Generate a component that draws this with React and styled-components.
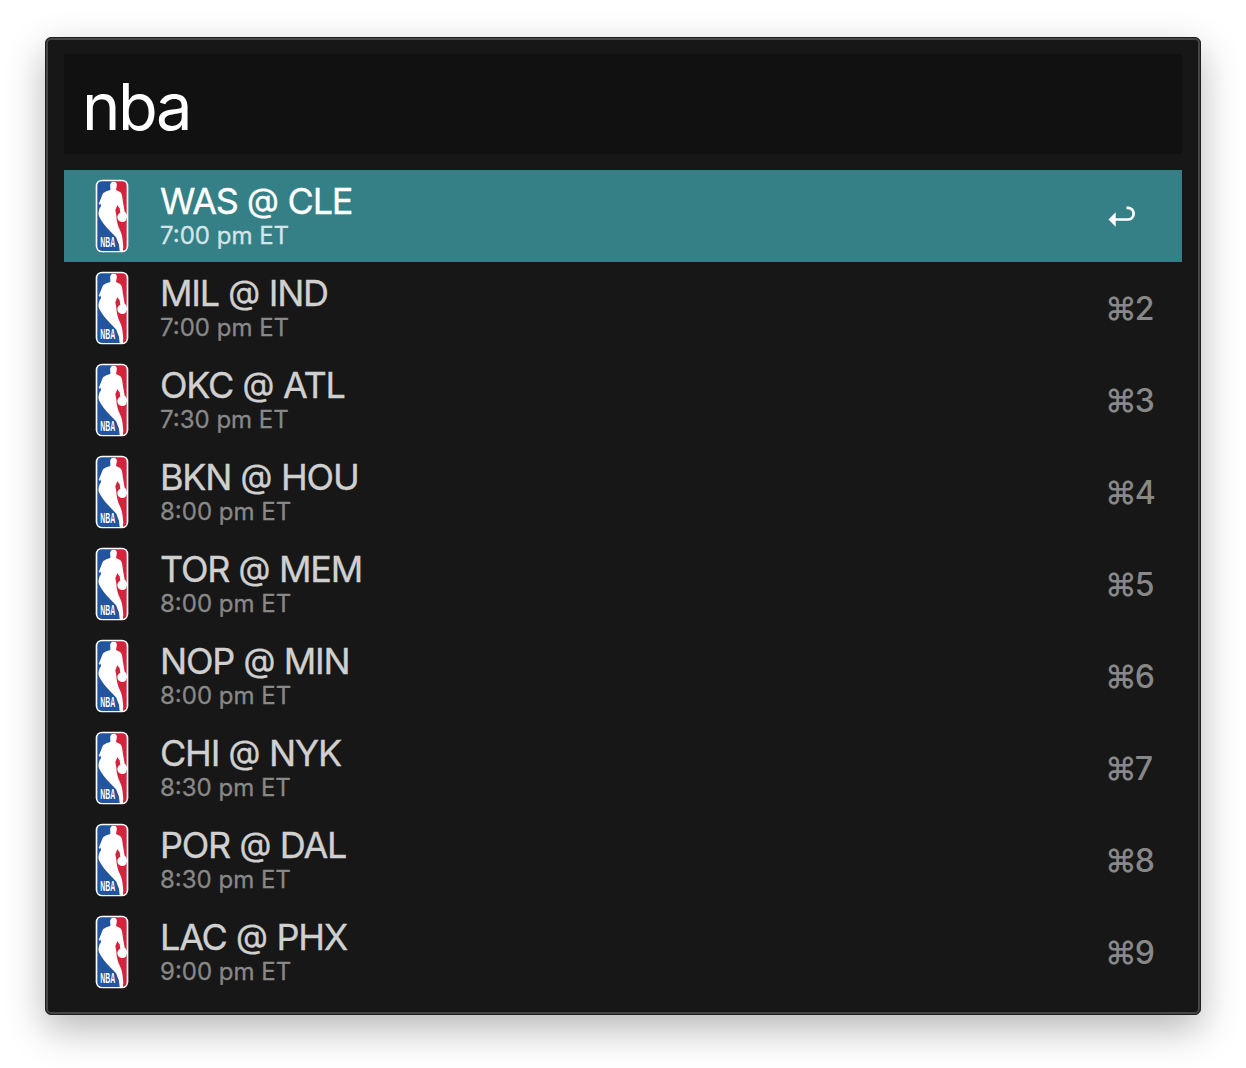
import React from "react";
import styled, { createGlobalStyle } from "styled-components";

const Global = createGlobalStyle`
  * { box-sizing: border-box; }
  body { margin: 0; background: #fff; font-family: Inter, "Liberation Sans", sans-serif; }
`;

const Page = styled.main`
  height: 1068px;
  padding: 37px 45px 0;
  overflow: hidden;
`;

const Panel = styled.section`
  height: 978px;
  padding: 16px 18px;
  display: flex;
  flex-direction: column;
  gap: 16px;
  border: 1px solid #1d1e1e;
  border-radius: 6px;
  background: #171717;
  box-shadow: inset 0 0 0 2px #444546, 0 14px 38px rgba(0, 0, 0, 0.29);
`;

const Search = styled.div`
  flex: none;
  height: 100px;
  padding: 6px 0 0 18px;
  display: flex;
  align-items: center;
  background: #111;
  color: #fff;
  font-size: 65px;
  line-height: 94px;
  font-weight: 400;
  letter-spacing: -2.4px;
`;

const List = styled.ul`
  margin: 0;
  padding: 0;
  list-style: none;
`;

const Row = styled.li`
  height: 92px;
  padding: 0 29px 0 31px;
  display: flex;
  align-items: center;
  background: ${(p) => (p.$active ? "#358086" : "transparent")};
`;

const Logo = styled.svg`
  flex: none;
  width: 34px;
  height: 74px;
  overflow: visible;
`;

const Labels = styled.div`
  flex: 1;
  margin-left: 31px;
`;

const Title = styled.div`
  height: 40px;
  font-size: 36px;
  line-height: 38px;
  font-weight: 400;
  -webkit-text-stroke: 0.35px currentColor;
  white-space: pre;
  letter-spacing: -1.2px;
  color: ${(p) => (p.$active ? "#fff" : "#d0d0d0")};
`;

const At = styled.span`
  margin-left: 0.4px;
  font-size: 33px;
  line-height: 30px;
  letter-spacing: -0.4px;
  vertical-align: 2px;
`;

const Time = styled.div`
  height: 28px;
  font-size: 24px;
  line-height: 28px;
  font-weight: 400;
  -webkit-text-stroke: 0.3px currentColor;
  white-space: nowrap;
  color: ${(p) => (p.$active ? "#d6e5e6" : "#888")};
`;

const Shortcut = styled.div`
  width: 48px;
  padding-top: 2px;
  font-size: 32px;
  line-height: 40px;
  font-weight: 500;
  letter-spacing: -2px;
  white-space: nowrap;
  color: #888;
`;

const Return = styled.svg`
  display: block;
  width: 30px;
  height: 24px;
  margin: 2px 0 0 3px;
`;

const games = [
  ["WAS", "CLE", "7:00 pm ET"],
  ["MIL", "IND", "7:00 pm ET"],
  ["OKC", "ATL", "7:30 pm ET"],
  ["BKN", "HOU", "8:00 pm ET"],
  ["TOR", "MEM", "8:00 pm ET"],
  ["NOP", "MIN", "8:00 pm ET"],
  ["CHI", "NYK", "8:30 pm ET"],
  ["POR", "DAL", "8:30 pm ET"],
  ["LAC", "PHX", "9:00 pm ET"],
];

const NbaLogo = () => (
  <Logo viewBox="0 0 102 222" aria-label="NBA">
    <rect x="2" y="2" width="98" height="218" rx="19" fill="#fff" />
    <path d="M21 7H60L64 110L74 216H21Q7 215 7 201V21Q7 7 21 7Z" fill="#23559f" />
    <path d="M60 7H81Q95 7 95 21V201Q95 214 84 215C83 194 80 178 69 158C63 148 58 137 60 122Z" fill="#d2253d" />
    <path d="M46 25C44 14 48 8 56 8C64 8 67 14 65 22L63 33L74 38C83 44 82 57 84 70L89 98C94 101 96 108 96 114C95 124 89 130 81 129C73 129 67 123 67 115C67 109 70 104 76 101L74 88L67 79L61 93L64 110C65 126 68 140 76 156C84 174 83 190 85 204L81 215H76L74 202L69 190L64 176C49 160 26 139 15 118L12 112C9 104 11 96 14 88L18 82L17 73L15 77L11 75L18 58L24 43L34 37L46 33Z" fill="#fff" />
    <text x="16" y="205" fill="#fff" fontFamily="Liberation Sans, sans-serif" fontWeight="700" fontSize="43" textLength="45" lengthAdjust="spacingAndGlyphs">NBA</text>
  </Logo>
);

const ReturnIcon = () => (
  <Return viewBox="0 0 30 24">
    <path d="M18.5 1.8H20.5a5.9 5.9 0 0 1 0 11.7H6" fill="none" stroke="#fff" strokeWidth="2.7" />
    <path d="M0.5 13.5L7.7 6.3V20.7Z" fill="#fff" />
  </Return>
);

export default function App() {
  return (
    <Page>
      <Global />
      <Panel>
        <Search>nba</Search>
        <List>
          {games.map(([away, home, time], i) => (
            <Row key={away} $active={i === 0}>
              <NbaLogo />
              <Labels>
                <Title $active={i === 0}>
                  {away} <At>@</At> {home}
                </Title>
                <Time $active={i === 0}>{time}</Time>
              </Labels>
              <Shortcut>{i === 0 ? <ReturnIcon /> : `⌘${i + 1}`}</Shortcut>
            </Row>
          ))}
        </List>
      </Panel>
    </Page>
  );
}
